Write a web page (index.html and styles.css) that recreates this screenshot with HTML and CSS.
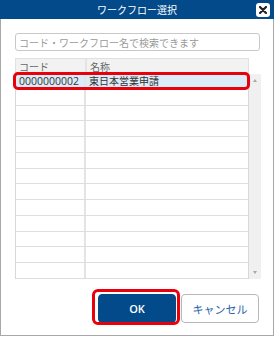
FILE: index.html
```html
<!DOCTYPE html>
<html lang="ja">
<head>
<meta charset="utf-8">
<title>ワークフロー選択</title>
<link rel="stylesheet" href="styles.css">
</head>
<body>
<div class="dialog">
  <div class="titlebar">
    <span class="title">ワークフロー選択</span>
    <button class="close" aria-label="閉じる">
      <svg width="8" height="8" viewBox="0 0 8 8"><path d="M1 1L7 7M7 1L1 7" stroke="#222" stroke-width="2.2" stroke-linecap="round"/></svg>
    </button>
  </div>
  <div class="content">
    <input class="search" type="text" placeholder="コード・ワークフロー名で検索できます">
    <div class="grid">
      <div class="thead">
        <div class="cell c1">コード</div>
        <div class="cell c2">名称</div>
      </div>
      <div class="tbody">
        <div class="row selected"><div class="cell c1 code">0000000002</div><div class="cell c2">東日本営業申請</div></div>
        <div class="row"><div class="cell c1"></div><div class="cell c2"></div></div>
        <div class="row"><div class="cell c1"></div><div class="cell c2"></div></div>
        <div class="row"><div class="cell c1"></div><div class="cell c2"></div></div>
        <div class="row"><div class="cell c1"></div><div class="cell c2"></div></div>
        <div class="row"><div class="cell c1"></div><div class="cell c2"></div></div>
        <div class="row"><div class="cell c1"></div><div class="cell c2"></div></div>
        <div class="row"><div class="cell c1"></div><div class="cell c2"></div></div>
        <div class="row"><div class="cell c1"></div><div class="cell c2"></div></div>
        <div class="row"><div class="cell c1"></div><div class="cell c2"></div></div>
        <div class="row"><div class="cell c1"></div><div class="cell c2"></div></div>
        <div class="row"><div class="cell c1"></div><div class="cell c2"></div></div>
        <div class="row"><div class="cell c1"></div><div class="cell c2"></div></div>
      </div>
      <div class="scrollbar">
        <span class="arrow up"></span>
        <span class="arrow down"></span>
      </div>
    </div>
    <div class="actions">
      <span class="ok-wrap"><button class="btn ok">OK</button></span>
      <button class="btn cancel">キャンセル</button>
    </div>
  </div>
</div>
</body>
</html>
```
FILE: styles.css
```css
* { box-sizing: border-box; }
html, body { margin: 0; padding: 0; background: #fff; }
body {
  font-family: "Noto Sans CJK JP", "Noto Sans", sans-serif;
  font-size: 10px;
  color: #333;
}
.dialog {
  width: 274px;
  height: 336px;
  display: flex;
  flex-direction: column;
}
.titlebar {
  height: 19px;
  background: #034a8a;
  color: #fff;
  display: flex;
  align-items: center;
  justify-content: center;
  position: relative;
}
.title {
  font-size: 10px;
  line-height: 19px;
}
.close {
  position: absolute;
  left: 256px;
  top: 3px;
  width: 14px;
  height: 14px;
  padding: 0;
  border: none;
  border-radius: 3px;
  background: #fff;
  display: flex;
  align-items: center;
  justify-content: center;
}
.content {
  flex: 1;
  border: 1px solid #a8a8a8;
  border-top: none;
  padding: 14px 13px 12px 14px;
  display: flex;
  flex-direction: column;
}
.search {
  width: 245px;
  height: 18px;
  margin: 0;
  border: 1px solid #c8c8c8;
  border-radius: 3px;
  padding: 0 3px;
  font-family: inherit;
  font-size: 10px;
  color: #333;
  outline: none;
}
.search::placeholder { color: #9a9a9a; }
.grid {
  margin-top: 7px;
  display: grid;
  grid-template-columns: 234px 12px;
  grid-template-rows: 16px 205px;
}
.thead {
  grid-column: 1;
  grid-row: 1;
  display: grid;
  grid-template-columns: 71px 1fr;
  background: #f2f2f2;
  border: 1px solid #e0e0e0;
  border-bottom: none;
  color: #666;
}
.tbody {
  grid-column: 1;
  grid-row: 2;
  display: grid;
  grid-template-rows: repeat(13, 1fr);
  border-left: 1px solid #d8d8d8;
  border-right: 1px solid #d8d8d8;
}
.row {
  display: grid;
  grid-template-columns: 70px 1fr;
  border-bottom: 1px solid #dedede;
  position: relative;
}
.cell {
  display: flex;
  align-items: center;
  padding-left: 3px;
  line-height: 1;
  white-space: nowrap;
}
.code {
  font-family: "Open Sans", "Noto Sans", sans-serif;
  font-size: 10.5px;
}
.c1 { border-right: 2px solid #e4e4e4; }
.row.selected { background: #dcebf8; }
.row.selected::after {
  content: "";
  position: absolute;
  left: -3px;
  right: -2px;
  top: -2px;
  bottom: -1px;
  border: 3px solid #e8000b;
  border-radius: 5px;
}
.scrollbar {
  grid-column: 2;
  grid-row: 2;
  background: #f0f0f0;
  display: flex;
  flex-direction: column;
  justify-content: space-between;
  align-items: center;
  padding: 5px 0 5px;
}
.arrow {
  width: 0;
  height: 0;
  border-left: 2.5px solid transparent;
  border-right: 2.5px solid transparent;
}
.arrow.up { border-bottom: 3px solid #a8a8a8; }
.arrow.down { border-top: 3px solid #a8a8a8; }
.actions {
  margin-top: 15px;
  display: flex;
  justify-content: flex-end;
  gap: 5px;
  padding-right: 1px;
}
.ok-wrap {
  position: relative;
  display: flex;
}
.ok-wrap::after {
  content: "";
  position: absolute;
  left: -6px;
  right: -4px;
  top: -5px;
  bottom: -2px;
  border: 3px solid #e8000b;
  border-radius: 6px;
}
.btn {
  width: 78px;
  height: 29px;
  margin: 0;
  border-radius: 4px;
  font-family: inherit;
  font-size: 11px;
  padding: 0;
}
.ok {
  background: #034a8a;
  color: #fff;
  border: 1px solid #034a8a;
  font-family: "Open Sans", "Noto Sans", sans-serif;
  font-weight: 600;
}
.cancel {
  background: #fff;
  color: #2962a8;
  border: 1px solid #b8b8b8;
}
```
